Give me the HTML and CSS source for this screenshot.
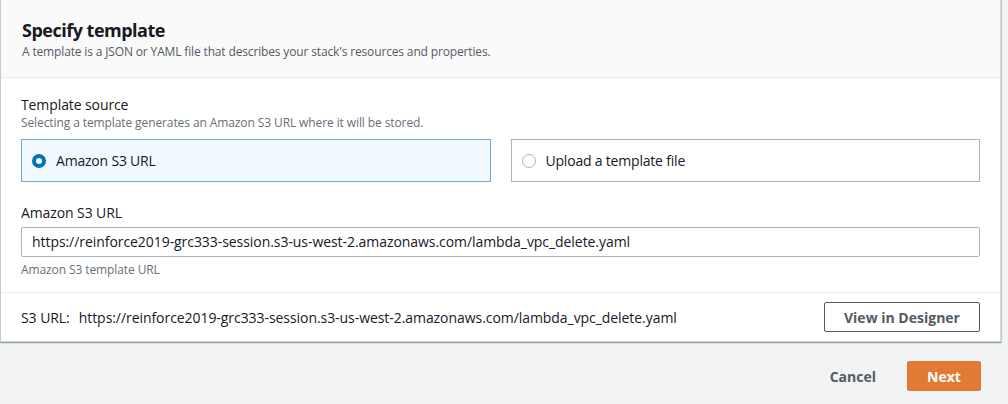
FILE: index.html
```html
<!DOCTYPE html>
<html>
<head>
<meta charset="utf-8">
<link rel="stylesheet" href="styles.css">
</head>
<body>
<div class="page">
  <div class="card">
    <div class="card-header">
      <h2 class="title">Specify template</h2>
      <p class="subtitle">A template is a JSON or YAML file that describes your stack's resources and properties.</p>
    </div>
    <div class="card-body">
      <div class="field">
        <div class="label">Template source</div>
        <div class="desc">Selecting a template generates an Amazon S3 URL where it will be stored.</div>
        <div class="tiles">
          <div class="tile selected"><span class="radio checked"></span><span class="tile-text">Amazon S3 URL</span></div>
          <div class="tile"><span class="radio"></span><span class="tile-text">Upload a template file</span></div>
        </div>
      </div>
      <div class="field field-url">
        <div class="label">Amazon S3 URL</div>
        <div class="input">https://reinforce2019-grc333-session.s3-us-west-2.amazonaws.com/lambda_vpc_delete.yaml</div>
        <div class="hint">Amazon S3 template URL</div>
      </div>
    </div>
    <div class="card-footer">
      <div class="s3url"><span class="s3label">S3 URL:</span>https://reinforce2019-grc333-session.s3-us-west-2.amazonaws.com/lambda_vpc_delete.yaml</div>
      <button class="btn btn-normal">View in Designer</button>
    </div>
  </div>
  <div class="actions">
    <button class="btn-link">Cancel</button>
    <button class="btn btn-primary">Next</button>
  </div>
</div>
</body>
</html>
```

FILE: styles.css
```css
* { box-sizing: border-box; }
html, body { margin: 0; padding: 0; }
body {
  background: #f2f3f3;
  font-family: "Open Sans", "Liberation Sans", sans-serif;
  color: #16191f;
  width: 1008px;
  height: 404px;
  overflow: hidden;
}
.page { padding: 0; }
.card {
  width: 1001px;
  margin-top: -1px;
  background: #fff;
  border: 1px solid #d5dbdb;
  border-left-color: #c4cbcb;
  box-shadow: 0 1px 1px 0 rgba(0,28,36,.3), 1px 1px 1px 0 rgba(0,28,36,.15);
}
.card-header {
  background: #fafafa;
  border-bottom: 1px solid #eaeded;
  padding: 18px 21px 0 21px;
  height: 78px;
}
.title {
  margin: 0;
  font-size: 18px;
  line-height: 24px;
  font-weight: 700;
  letter-spacing: -0.5px;
}
.subtitle {
  margin: 1px 0 0 0;
  font-size: 12px;
  line-height: 18px;
  color: #545b64;
  letter-spacing: -0.15px;
}
.card-body { padding: 17px 20px 0 20px; }
.label {
  font-size: 14px;
  line-height: 20px;
  color: #16191f;
  letter-spacing: -0.1px;
}
.desc, .hint {
  font-size: 12px;
  line-height: 16px;
  color: #687078;
  letter-spacing: -0.1px;
}
.tiles {
  display: flex;
  gap: 20px;
  margin-top: 8px;
}
.tile {
  flex: 1;
  height: 43px;
  border: 1px solid #aab7b8;
  display: flex;
  align-items: center;
  padding-left: 10px;
}
.tile.selected {
  background: #f1faff;
  border-color: #6aaed8;
}
.radio {
  width: 14px;
  height: 14px;
  border-radius: 50%;
  border: 1px solid #aab7b8;
  background: #fff;
  margin-right: 10px;
}
.radio.checked {
  border: 4px solid #0073bb;
}
.tile-text {
  font-size: 14px;
  letter-spacing: -0.2px;
}
.field-url { margin-top: 21px; }
.input {
  margin-top: 4px;
  height: 30px;
  border: 1px solid #aab7b8;
  border-radius: 2px;
  padding: 0 10px;
  font-size: 14px;
  line-height: 28px;
  letter-spacing: -0.06px;
}
.hint { margin-top: 5px; }
.card-footer {
  margin-top: 14px;
  border-top: 1px solid #eaeded;
  display: flex;
  align-items: center;
  justify-content: space-between;
  padding: 9px 20px 9px 20px;
}
.s3url {
  font-size: 14px;
  letter-spacing: -0.06px;
}
.s3label { margin-right: 9px; }
.btn {
  font-family: inherit;
  font-weight: 700;
  font-size: 14px;
  border-radius: 2px;
  cursor: pointer;
  letter-spacing: 0;
}
.btn-normal {
  width: 156px;
  height: 30px;
  background: #fff;
  border: 1px solid #545b64;
  color: #545b64;
}
.actions {
  display: flex;
  justify-content: flex-end;
  align-items: center;
  padding: 19px 27px 0 0;
  gap: 31px;
}
.btn-link {
  background: none;
  border: none;
  font-family: inherit;
  font-weight: 700;
  font-size: 14px;
  color: #545b64;
  letter-spacing: 0;
  padding: 0;
}
.btn-primary {
  width: 74px;
  height: 30px;
  background: #e17a34;
  border: 1px solid #e17a34;
  color: #fff;
}
```
